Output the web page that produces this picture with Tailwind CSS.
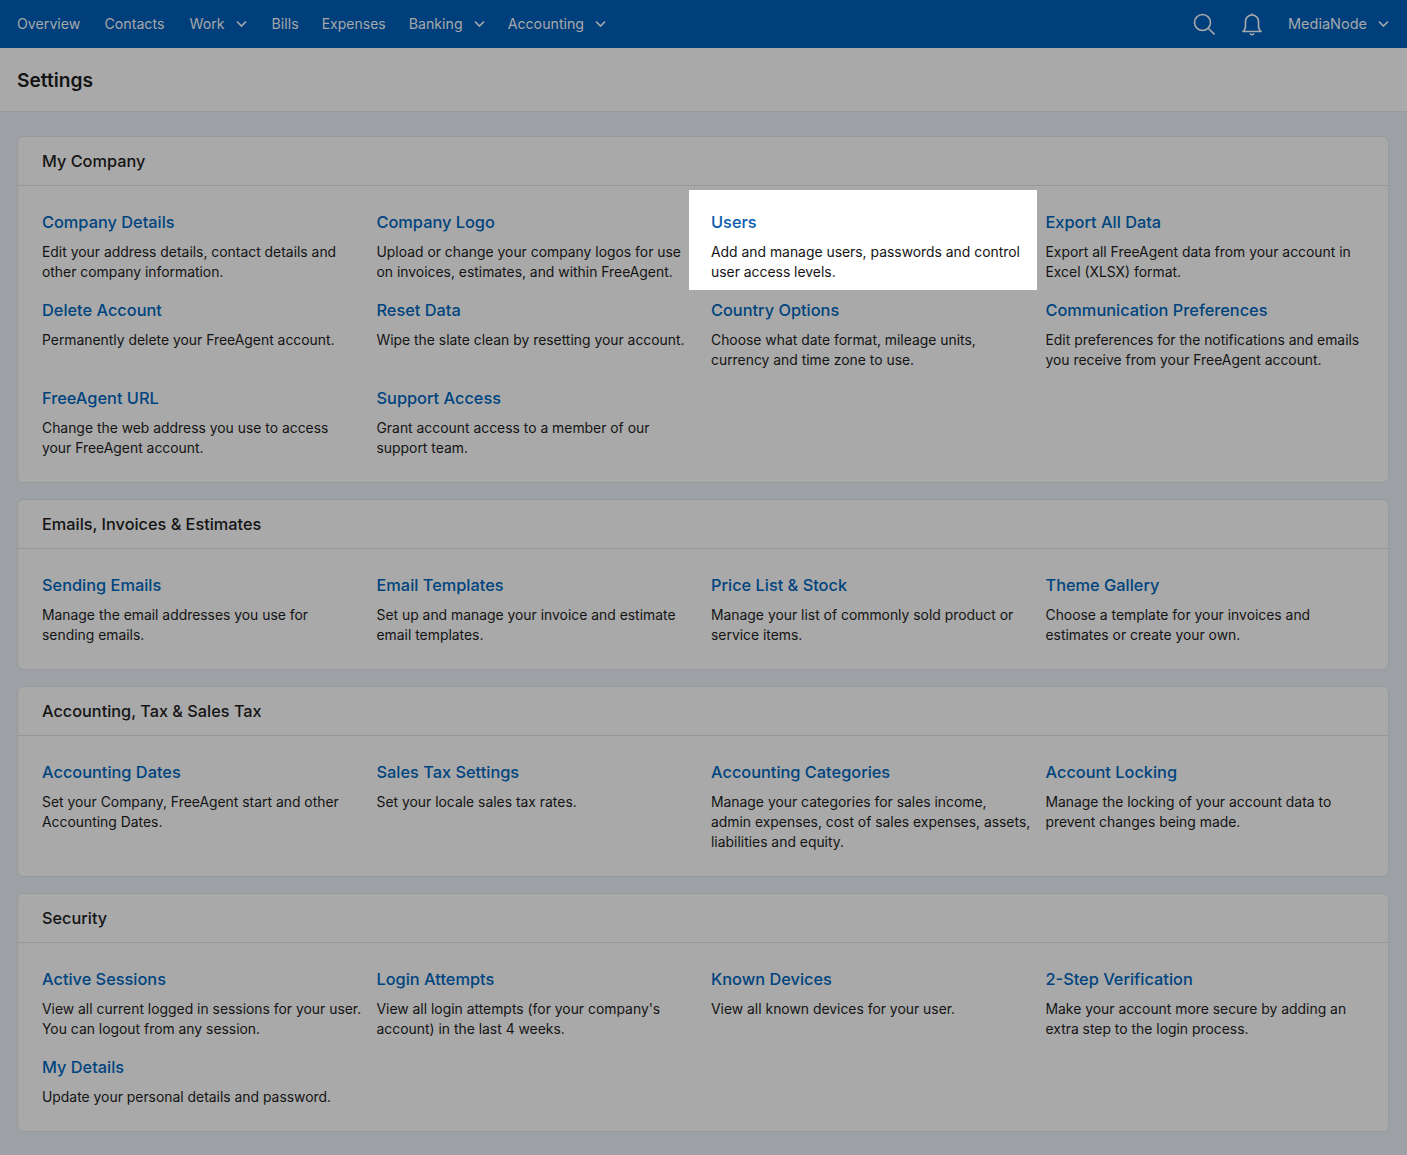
<!doctype html>
<html lang="en">

<head>
  <meta charset="utf-8">
  <meta name="viewport" content="width=device-width, initial-scale=1">
  <script src="https://cdn.jsdelivr.net/npm/@tailwindcss/browser@4"></script>
  <title>Settings</title>
</head>

<body class="antialiased bg-[#9da0a5] text-[#141414] font-['Inter',sans-serif] text-[13.9px] leading-5">
  <nav class="h-12 bg-[#003f7c] text-[#a6a8aa] text-[14.2px] flex items-center justify-between pl-[17px] pr-[18px]">
    <div class="flex items-center gap-6">
      <a>Overview</a>
      <a>Contacts</a>
      <a class="flex items-center gap-[11px] ml-px">Work
        <svg class="w-[11px] h-[8px]" viewBox="0 0 11 8" fill="none" stroke="currentColor" stroke-width="1.6"><path d="M1 1.500l4.500 4.500L10 1.500"/></svg>
      </a>
      <a class="ml-px">Bills</a>
      <a class="-ml-px text-[14px]">Expenses</a>
      <a class="flex items-center gap-[11px] -ml-px">Banking
        <svg class="w-[11px] h-[8px]" viewBox="0 0 11 8" fill="none" stroke="currentColor" stroke-width="1.6"><path d="M1 1.500l4.500 4.500L10 1.500"/></svg>
      </a>
      <a class="flex items-center gap-[11px] -ml-px">Accounting
        <svg class="w-[11px] h-[8px]" viewBox="0 0 11 8" fill="none" stroke="currentColor" stroke-width="1.6"><path d="M1 1.500l4.500 4.500L10 1.500"/></svg>
      </a>
    </div>
    <div class="flex items-center">
      <svg class="w-[22px] h-[22px] mr-[26px]" viewBox="0 0 22 22" fill="none" stroke="currentColor" stroke-width="1.6"><circle cx="9.500" cy="9.500" r="8"/><path d="M15.500 15.500l6 6"/></svg>
      <svg class="w-[22px] h-[24px] mr-[25px]" viewBox="0 0 22 24" fill="none" stroke="currentColor" stroke-width="1.6"><path d="M2 19.500c2-1.500 2.500-3 2.500-6V9.500a6.500 6.500 0 0 1 13 0v4c0 3 .5 4.500 2.500 6z" stroke-linejoin="round"/><path d="M9 21.500c.5 1.500 3.500 1.500 4 0"/><path d="M11 3V1.500"/></svg>
      <a class="flex items-center gap-[11px] text-[14.5px]">MediaNode
        <svg class="w-[11px] h-[8px]" viewBox="0 0 11 8" fill="none" stroke="currentColor" stroke-width="1.6"><path d="M1 1.500l4.500 4.500L10 1.500"/></svg>
      </a>
    </div>
  </nav>

  <header class="h-[64px] bg-[#a9a9a9] border-b border-[#989a9c] flex items-center px-[17px]">
    <h1 class="text-[19.2px] font-semibold">Settings</h1>
  </header>

  <main id="sections" class="pl-[17px] pr-[18px] pt-6 pb-[23px] flex flex-col gap-4"></main>

  <script>
    const sections = [
      ['My Company', [
        ['Company Details', 'Edit your address details, contact details and other company information.'],
        ['Company Logo', 'Upload or change your company logos for use on invoices, estimates, and within FreeAgent.'],
        ['Users', 'Add and manage users, passwords and control user access levels.'],
        ['Export All Data', 'Export all FreeAgent data from your account in Excel (XLSX) format.'],
        ['Delete Account', 'Permanently delete your FreeAgent account.'],
        ['Reset Data', 'Wipe the slate clean by resetting your account.'],
        ['Country Options', 'Choose what date format, mileage units, currency and time zone to use.'],
        ['Communication Preferences', 'Edit preferences for the notifications and emails you receive from your FreeAgent account.'],
        ['FreeAgent URL', 'Change the web address you use to access your FreeAgent account.'],
        ['Support Access', 'Grant account access to a member of our support team.'],
      ]],
      ['Emails, Invoices & Estimates', [
        ['Sending Emails', 'Manage the email addresses you use for sending emails.'],
        ['Email Templates', 'Set up and manage your invoice and estimate email templates.'],
        ['Price List & Stock', 'Manage your list of commonly sold product or service items.'],
        ['Theme Gallery', 'Choose a template for your invoices and estimates or create your own.'],
      ]],
      ['Accounting, Tax & Sales Tax', [
        ['Accounting Dates', 'Set your Company, FreeAgent start and other Accounting Dates.'],
        ['Sales Tax Settings', 'Set your locale sales tax rates.'],
        ['Accounting Categories', 'Manage your categories for sales income, admin&nbsp;expenses, cost of sales expenses, assets, liabilities and equity.'],
        ['Account Locking', 'Manage the locking of your account data to prevent changes being made.'],
      ]],
      ['Security', [
        ['Active Sessions', 'View all current logged in sessions for your user. You can logout from any session.'],
        ['Login Attempts', "View all login attempts (for your company's account) in the last 4 weeks."],
        ['Known Devices', 'View all known devices for your user.'],
        ['2-Step Verification', 'Make your account more secure by adding an extra step to the login process.'],
        ['My Details', 'Update your personal details and password.'],
      ]],
    ];

    function esc(s) {
      return s.replace(/&/g, '&amp;');
    }

    function item([title, text]) {
      // the tour overlay leaves only the Users item lit
      if (title == 'Users') {
        return `<div class="relative">
          <div class="absolute -left-[22px] -right-[7px] -top-5 -bottom-2 bg-white"></div>
          <h3 class="relative h-6 leading-6 text-[16.35px] font-medium text-[#0b5cad]">${title}</h3>
          <p class="relative mt-2 -mr-px">${text}</p>
        </div>`;
      }
      return `<div>
        <h3 class="h-6 leading-6 text-[16.35px] font-medium text-[#00447f]">${esc(title)}</h3>
        <p class="mt-2 -mr-px">${text}</p>
      </div>`;
    }

    document.getElementById('sections').innerHTML = sections.map(([name, items]) => `
      <section class="bg-[#a9a9a9] border border-[#97999c] rounded-md">
        <h2 class="h-[49px] border-b border-[#979797] px-6 flex items-center text-[16.3px] font-medium">${esc(name)}</h2>
        <div class="grid grid-cols-4 gap-x-4 gap-y-4 px-6 pt-6 pb-6">${items.map(item).join('')}</div>
      </section>`).join('');
  </script>
</body>

</html>
